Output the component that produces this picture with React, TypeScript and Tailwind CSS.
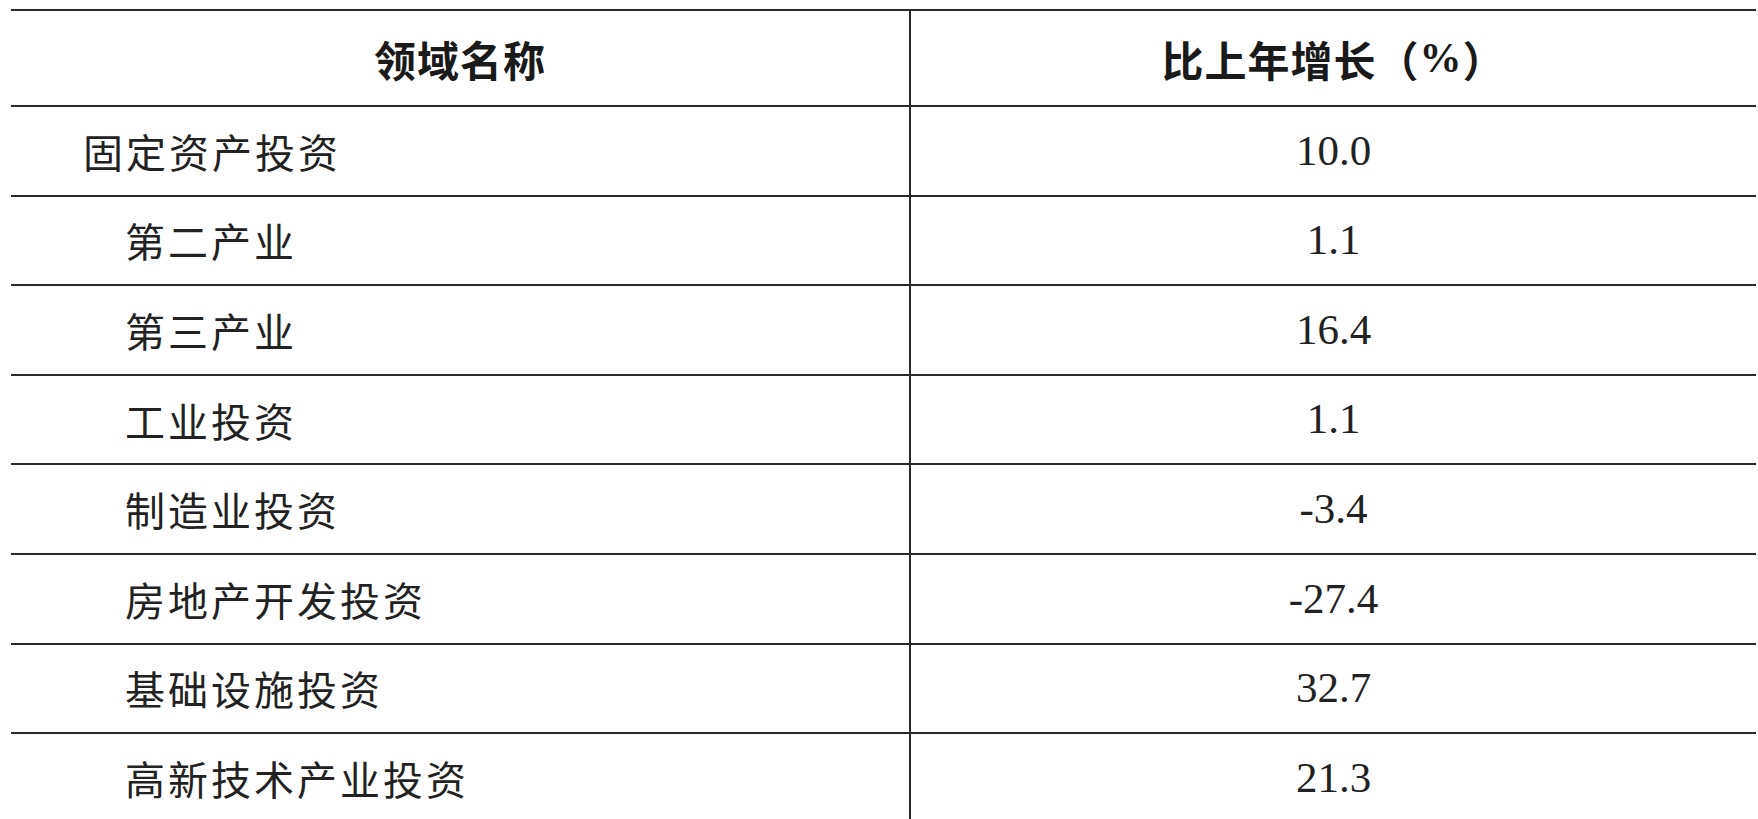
const rows = [
    { name: "固定资产投资", value: "10.0", indent: false },
    { name: "第二产业", value: "1.1", indent: true },
    { name: "第三产业", value: "16.4", indent: true },
    { name: "工业投资", value: "1.1", indent: true },
    { name: "制造业投资", value: "-3.4", indent: true },
    { name: "房地产开发投资", value: "-27.4", indent: true },
    { name: "基础设施投资", value: "32.7", indent: true },
    { name: "高新技术产业投资", value: "21.3", indent: true },
];

const cjk = "font-['Noto_Sans_CJK_SC',sans-serif]";

const App = () => {
    return (
        <div className="w-full h-[819px] overflow-hidden bg-white pl-[11px] pt-[9px] text-[#222]">
            <div className="w-[1745px] border-t-2 border-[#2a2a2a]">
                <div className="grid grid-cols-[900px_1fr] border-b-2 border-[#2a2a2a] h-[96px]">
                    <div className={`flex items-center justify-center border-r-2 border-[#2a2a2a] text-[42px] font-bold tracking-[1px] text-[#1a1a1a] ${cjk}`}>
                        领域名称
                    </div>
                    <div className={`flex items-center justify-center text-[42px] font-bold tracking-[1px] text-[#1a1a1a] ${cjk}`}>
                        比上年增长（<span className="font-['Liberation_Serif',serif] font-bold">%</span>）
                    </div>
                </div>

                {rows.map((row) => (
                    <div key={row.name} className="grid grid-cols-[900px_1fr] border-b-2 border-[#2a2a2a] h-[89.6px]">
                        <div className={`flex items-center border-r-2 border-[#2a2a2a] text-[40px] tracking-[3px] ${row.indent ? "pl-[114px]" : "pl-[72px]"} ${cjk}`}>
                            {row.name}
                        </div>
                        <div className="flex items-center justify-center text-[43px] font-['Liberation_Serif',serif]">
                            {row.value}
                        </div>
                    </div>
                ))}
            </div>
        </div>
    );
};

export default App;
